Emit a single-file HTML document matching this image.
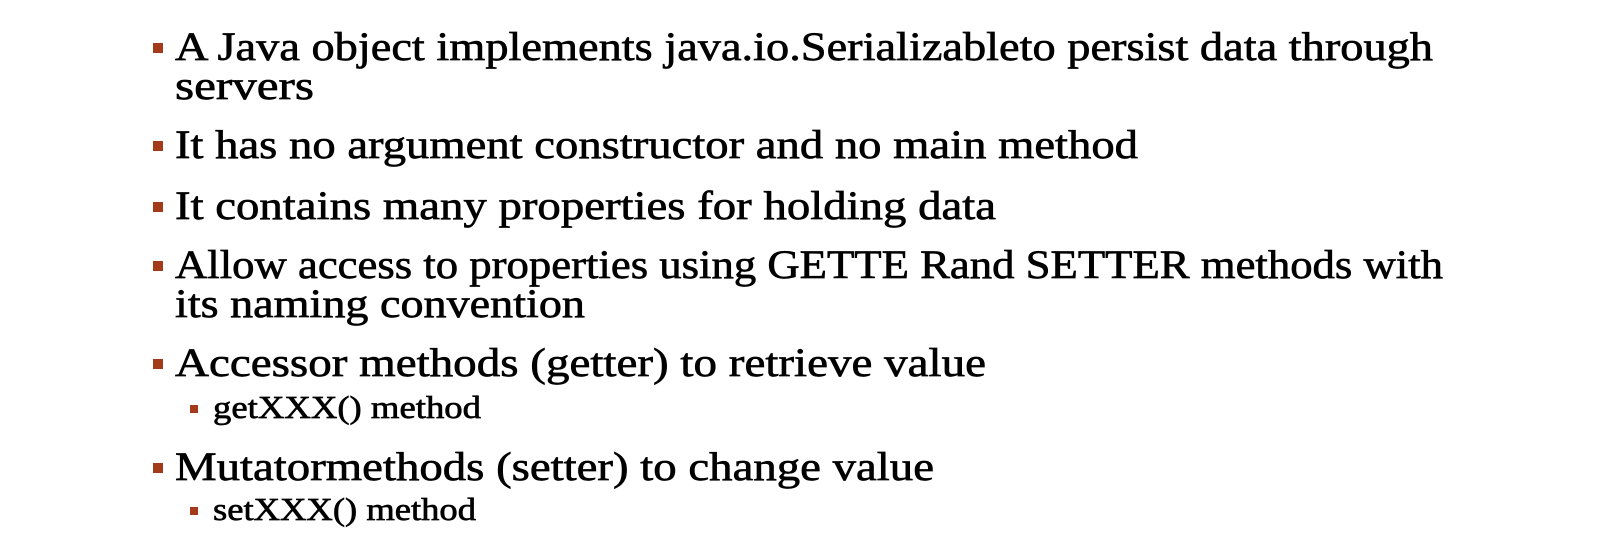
<!DOCTYPE html>
<html><head><meta charset="utf-8"><style>
html,body{margin:0;padding:0;background:#fff;width:1598px;height:553px;overflow:hidden}
svg text{font-family:"Liberation Serif",serif;fill:#000;stroke:#000;stroke-width:0.6px}
</style></head><body>
<svg width="1598" height="553" viewBox="0 0 1598 553" xmlns="http://www.w3.org/2000/svg">
<g fill="#a33a1a">
<rect x="153" y="43" width="10" height="10"/>
<rect x="153" y="141" width="10" height="10"/>
<rect x="153" y="202" width="10" height="10"/>
<rect x="153" y="261" width="10" height="10"/>
<rect x="153" y="359" width="10" height="10"/>
<rect x="190" y="405" width="8" height="8"/>
<rect x="153" y="463" width="10" height="10"/>
<rect x="190" y="507" width="8" height="8"/>
</g>
<g font-size="37">
<text transform="translate(175,60) scale(1,1.08)" textLength="1258" lengthAdjust="spacingAndGlyphs">A Java object implements java.io.Serializableto persist data through</text>
<text transform="translate(175,99) scale(1,1.08)" textLength="139" lengthAdjust="spacingAndGlyphs">servers</text>
<text transform="translate(175,158) scale(1,1.08)" textLength="963" lengthAdjust="spacingAndGlyphs">It has no argument constructor and no main method</text>
<text transform="translate(175,219) scale(1,1.08)" textLength="821" lengthAdjust="spacingAndGlyphs">It contains many properties for holding data</text>
<text transform="translate(175,278) scale(1,1.08)" textLength="1268" lengthAdjust="spacingAndGlyphs">Allow access to properties using GETTE Rand SETTER methods with</text>
<text transform="translate(175,317) scale(1,1.08)" textLength="410" lengthAdjust="spacingAndGlyphs">its naming convention</text>
<text transform="translate(175,376) scale(1,1.08)" textLength="811" lengthAdjust="spacingAndGlyphs">Accessor methods (getter) to retrieve value</text>
<text transform="translate(175,480) scale(1,1.08)" textLength="759" lengthAdjust="spacingAndGlyphs">Mutatormethods (setter) to change value</text>
</g>
<g font-size="29">
<text transform="translate(213,418) scale(1,1.08)" textLength="268" lengthAdjust="spacingAndGlyphs">getXXX() method</text>
<text transform="translate(213,520) scale(1,1.08)" textLength="263" lengthAdjust="spacingAndGlyphs">setXXX() method</text>
</g>
</svg>
</body></html>
